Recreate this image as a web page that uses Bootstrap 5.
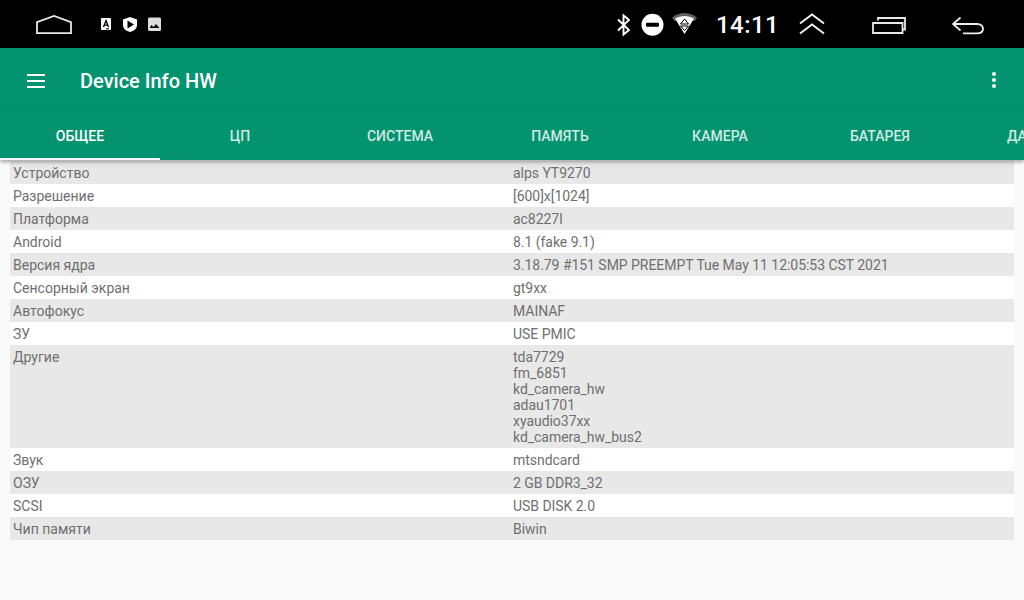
<!doctype html>
<html lang="ru">
<head>
<meta charset="utf-8">
<title>Device Info HW</title>
<link href="https://cdn.jsdelivr.net/npm/bootstrap@5.3.0/dist/css/bootstrap.min.css" rel="stylesheet">
<style>
html,body{height:100%;}
body{width:1024px;height:600px;overflow:hidden;background:#fafafa;font-family:Roboto,"Liberation Sans",sans-serif;}
.sysbar{height:48px;background:#000;color:#fff;}
.sysbar svg{display:block;flex:none;}
.clock{font-size:24px;font-weight:500;letter-spacing:.45px;line-height:48px;width:64px;margin-left:19px;padding-top:1px;}
.appbar{height:64px;background:#03946f;color:#fff;}
.apptitle{font-size:20px;font-weight:500;line-height:1;margin-left:35px;padding-top:2px;}
.tabstrip{height:48px;background:#03946f;box-shadow:0 2px 4px rgba(0,0,0,.35);overflow:hidden;position:relative;z-index:2;}
.tabitem{flex:0 0 160px;height:48px;line-height:48px;text-align:center;font-size:14px;font-weight:500;color:rgba(255,255,255,.82);text-transform:uppercase;white-space:nowrap;letter-spacing:.02px;}
.tabitem.on{color:#fff;border-bottom:2px solid #fff;}
.infolist{margin:1px 10px 0;font-size:14px;line-height:16px;color:#6f6f6f;}
.inforow{padding:4px 3px 3px;}
.inforow:nth-child(odd){background:#e8e8e8;}
.inforow:nth-child(even){background:#fff;}
.inforow>div{padding-left:0;padding-right:0;}
.inforow>div+div{padding-left:3px;letter-spacing:-.04px;}
.inforow>div:first-child{flex:0 0 497px;width:497px;}
.inforow>div:last-child{flex:1 1 0;width:auto;}
</style>
</head>
<body>
<div class="sysbar d-flex align-items-center">
  <svg style="margin-left:36px" width="36" height="48" viewBox="36 0 36 48" fill="none" stroke="#e8e8e8" stroke-width="1.800"><path d="M37 33.100V22.200L54 16L71 22.200V33.100Z"/></svg>
  <svg style="margin-left:29px" width="10" height="48" viewBox="101 0 10 48"><path fill="#fff" d="M101 19a1 1 0 0 1 1-1h8a1 1 0 0 1 1 1v10a1 1 0 0 1-1 1h-8a1 1 0 0 1-1-1z"/><path fill="none" stroke="#000" stroke-width="1.300" d="M103.500 27L106 20.500L108.500 27M104.300 25.200H107.700"/><path stroke="#000" d="M106 28.800h3"/></svg>
  <svg style="margin-left:12px" width="14" height="48" viewBox="123 0 14 48"><path fill="#fff" d="M130 17L137 19.500V25c0 3.500-3 6-7 7c-4-1-7-3.500-7-7V19.500z"/><path fill="#000" d="M127.500 20.500L134 24.500L127.500 28.500z"/></svg>
  <svg style="margin-left:11px" width="13" height="48" viewBox="148 0 13 48"><rect x="148" y="17.500" width="13" height="13.500" rx="1.500" fill="#ddd"/><path fill="#000" d="M149.500 28L151.500 25L153.500 27L156 24L159.500 28z"/></svg>
  <div class="flex-grow-1"></div>
  <svg width="13" height="48" viewBox="617 0 13 48" fill="none" stroke="#fff" stroke-width="1.900"><path d="M618 19.500L629 30L623.500 34.500V15.500L629 20L618 30.500"/></svg>
  <svg style="margin-left:11px" width="23" height="48" viewBox="641 0 23 48"><circle cx="652.500" cy="24.700" r="11" fill="#fff"/><rect x="646" y="22.700" width="13" height="4" rx="1" fill="#000"/></svg>
  <svg style="margin-left:8px" width="25" height="48" viewBox="672 0 25 48"><path fill="#5f5f5f" d="M672 17.500C679 11.500 690 11.500 697 17.500L694.500 21H674.500z"/><path fill="#fff" d="M675 18.500C681 15 688 15 694 18.500L684.500 34z"/><path fill="none" stroke="#000" d="M684.500 19L680.500 24H688.500zM680.500 26H688.500L684.500 30.500z"/></svg>
  <div class="clock">14:11</div>
  <svg style="margin-left:19px" width="26" height="48" viewBox="799 0 26 48" fill="none" stroke="#f0f0f0" stroke-width="2"><path d="M800 23.500L812 14.500L824 23.500M800 33.500L812 24.500L824 33.500"/></svg>
  <svg style="margin-left:47px" width="34" height="48" viewBox="872 0 34 48" fill="none" stroke="#e8e8e8" stroke-width="1.800"><path d="M873 23H902.500V33H873zM878 20.500V18H905V29.500H902.500"/></svg>
  <svg style="margin-left:46px" width="32" height="48" viewBox="952 0 32 48" fill="none" stroke="#eee" stroke-width="1.800"><path d="M960.500 17.500L953 24L960.500 30.500M953 24H977C981 24 983 26.300 983 28.700C983 31.500 981 33.300 977 33.300H963"/></svg>
  <div style="width:40px"></div>
</div>
<div class="appbar d-flex align-items-center">
  <svg style="margin-left:27px;margin-top:1px" width="18" height="14" viewBox="0 0 18 14" fill="#fff"><rect y="0" width="18" height="2"/><rect y="6" width="18" height="2"/><rect y="12" width="18" height="2"/></svg>
  <div class="apptitle flex-grow-1">Device Info HW</div>
  <svg style="margin-right:27px" width="6" height="18" viewBox="0 0 6 18" fill="#fff"><circle cx="3" cy="3" r="2"/><circle cx="3" cy="9" r="2"/><circle cx="3" cy="15" r="2"/></svg>
</div>
<div class="tabstrip d-flex">
  <div class="tabitem on">Общее</div>
  <div class="tabitem">ЦП</div>
  <div class="tabitem">Система</div>
  <div class="tabitem">Память</div>
  <div class="tabitem">Камера</div>
  <div class="tabitem">Батарея</div>
  <div class="tabitem">Датчики</div>
</div>
<div class="infolist">
  <div class="inforow row g-0"><div class="col-6">Устройство</div><div class="col-6">alps YT9270</div></div>
  <div class="inforow row g-0"><div class="col-6">Разрешение</div><div class="col-6">[600]x[1024]</div></div>
  <div class="inforow row g-0"><div class="col-6">Платформа</div><div class="col-6">ac8227l</div></div>
  <div class="inforow row g-0"><div class="col-6">Android</div><div class="col-6">8.1 (fake 9.1)</div></div>
  <div class="inforow row g-0"><div class="col-6">Версия ядра</div><div class="col-6">3.18.79 #151 SMP PREEMPT Tue May 11 12:05:53 CST 2021</div></div>
  <div class="inforow row g-0"><div class="col-6">Сенсорный экран</div><div class="col-6">gt9xx</div></div>
  <div class="inforow row g-0"><div class="col-6">Автофокус</div><div class="col-6">MAINAF</div></div>
  <div class="inforow row g-0"><div class="col-6">ЗУ</div><div class="col-6">USE PMIC</div></div>
  <div class="inforow row g-0"><div class="col-6">Другие</div><div class="col-6">tda7729<br>fm_6851<br>kd_camera_hw<br>adau1701<br>xyaudio37xx<br>kd_camera_hw_bus2</div></div>
  <div class="inforow row g-0"><div class="col-6">Звук</div><div class="col-6">mtsndcard</div></div>
  <div class="inforow row g-0"><div class="col-6">ОЗУ</div><div class="col-6">2 GB DDR3_32</div></div>
  <div class="inforow row g-0"><div class="col-6">SCSI</div><div class="col-6">USB DISK 2.0</div></div>
  <div class="inforow row g-0"><div class="col-6">Чип памяти</div><div class="col-6">Biwin</div></div>
</div>
<script src="https://cdn.jsdelivr.net/npm/bootstrap@5.3.0/dist/js/bootstrap.bundle.min.js"></script>
</body>
</html>
